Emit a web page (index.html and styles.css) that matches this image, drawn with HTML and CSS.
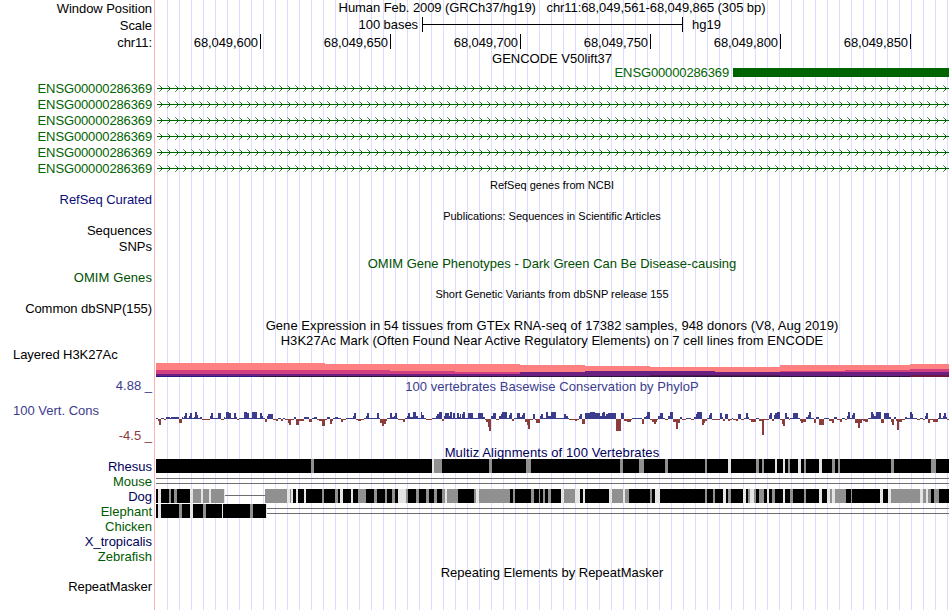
FILE: index.html
```html
<!DOCTYPE html>
<html lang="en">
<head>
<meta charset="utf-8">
<title>Human chr11:68,049,561-68,049,865</title>
<link rel="stylesheet" href="styles.css">
</head>
<body>
<main class="browser">
  <div class="row h17"><div class="label">Window Position</div><div class="title raise pos">Human Feb. 2009 (GRCh37/hg19) &nbsp; chr11:68,049,561-68,049,865 (305 bp)</div></div>
  <div class="row h17"><div class="label">Scale</div><div class="scale"><span class="bases">100 bases</span><i class="bar"></i><span>hg19</span></div></div>
  <div class="row h17"><div class="label">chr11:</div><div class="ruler"><span>68,049,600</span><span>68,049,650</span><span>68,049,700</span><span>68,049,750</span><span>68,049,800</span><span>68,049,850</span></div></div>
  <div class="row h14"><div></div><div class="title low">GENCODE V50lift37</div></div>
  <div class="row h16 green"><div></div><div class="gene"><span>ENSG00000286369</span><i></i></div></div>
  <div class="row h16 green"><div class="label">ENSG00000286369</div><svg class="intron"></svg></div>
  <div class="row h16 green"><div class="label">ENSG00000286369</div><svg class="intron"></svg></div>
  <div class="row h16 green"><div class="label">ENSG00000286369</div><svg class="intron"></svg></div>
  <div class="row h16 green"><div class="label">ENSG00000286369</div><svg class="intron"></svg></div>
  <div class="row h16 green"><div class="label">ENSG00000286369</div><svg class="intron"></svg></div>
  <div class="row h16 green"><div class="label">ENSG00000286369</div><svg class="intron"></svg></div>
  <div class="row h15"><div></div><div class="title small">RefSeq genes from NCBI</div></div>
  <div class="row h16 navy"><div class="label">RefSeq Curated</div></div>
  <div class="row h15"><div></div><div class="title small">Publications: Sequences in Scientific Articles</div></div>
  <div class="row h16"><div class="label plain">Sequences</div></div>
  <div class="row h16"><div class="label plain">SNPs</div></div>
  <div class="row h15 omim"><div></div><div class="title low">OMIM Gene Phenotypes - Dark Green Can Be Disease-causing</div></div>
  <div class="row h16 omim"><div class="label wide">OMIM Genes</div></div>
  <div class="row h15"><div></div><div class="title small">Short Genetic Variants from dbSNP release 155</div></div>
  <div class="row h16"><div class="label">Common dbSNP(155)</div></div>
  <div class="row h16"><div></div><div class="title low loose">Gene Expression in 54 tissues from GTEx RNA-seq of 17382 samples, 948 donors (V8, Aug 2019)</div></div>
  <div class="row h15"><div></div><div class="title loose">H3K27Ac Mark (Often Found Near Active Regulatory Elements) on 7 cell lines from ENCODE</div></div>
  <div class="row h30 mark"><div class="label left">Layered H3K27Ac</div><svg id="mark" viewBox="155 348 794 30"></svg></div>
  <div class="row h16 cons"><div class="label plain">4.88 _</div><div class="title low phylo">100 vertebrates Basewise Conservation by PhyloP</div></div>
  <div class="row h50 cons"><div class="consLabels"><span class="left">100 Vert. Cons</span><span class="min">-4.5 _</span></div><svg id="phylop" viewBox="155 394 794 50"></svg></div>
  <div class="row h15 multiz"><div></div><div class="title">Multiz Alignments of 100 Vertebrates</div></div>
  <div class="row h15 dark"><div class="label plain">Rhesus</div><svg id="rhesus" viewBox="155 0 794 15"></svg></div>
  <div class="row h15 forest"><div class="label plain">Mouse</div><svg id="mouse" viewBox="155 0 794 15"></svg></div>
  <div class="row h15 dark"><div class="label plain">Dog</div><svg id="dog" viewBox="155 0 794 15"></svg></div>
  <div class="row h15 forest"><div class="label plain">Elephant</div><svg id="elephant" viewBox="155 0 794 15"></svg></div>
  <div class="row h15 forest"><div class="label plain">Chicken</div></div>
  <div class="row h15 dark"><div class="label plain">X_tropicalis</div></div>
  <div class="row h15 forest"><div class="label plain">Zebrafish</div></div>
  <div class="row h15 repeat"><div></div><div class="title">Repeating Elements by RepeatMasker</div></div>
  <div class="row h15 masker"><div class="label">RepeatMasker</div></div>
</main>
<script src="tracks.js"></script>
</body>
</html>
```
FILE: styles.css
```css
body {
  margin: 0;
  background: #fff;
  color: #000;
  font: 13px "Liberation Sans", Arial, sans-serif;
}

.browser {
  width: 949px;
  height: 610px;
  overflow: hidden;
  background:
    linear-gradient(#ffb4b4, #ffb4b4) 154px 0 / 1px 100% no-repeat,
    linear-gradient(#fff, #fff) 0 0 / 156px 100% no-repeat,
    linear-gradient(90deg, #dcdcff 1px, transparent 1px) 167px 0 / 12px 100% repeat-x;
}

.row {
  display: grid;
  grid-template-columns: 155px 794px;
  white-space: nowrap;
}

.row svg { display: block; width: 794px; height: 100%; shape-rendering: crispEdges; }

.h14 { height: 14px; line-height: 14px; }
.h15 { height: 15px; line-height: 15px; }
.h16 { height: 16px; line-height: 16px; }
.h17 { height: 17px; line-height: 17px; }
.h30 { height: 30px; line-height: 14px; }
.h50 { height: 50px; line-height: 16px; }

.label { padding-right: 3px; text-align: right; letter-spacing: -0.06px; }
.label.plain { letter-spacing: 0; }
.label.wide { letter-spacing: 0.1px; }
.label.left { padding-left: 13px; text-align: left; }
.title { text-align: center; }
.title.raise { line-height: 15px; }
.title.low { padding-top: 1px; }
.loose { letter-spacing: 0.06px; }
.phylo { letter-spacing: 0.03px; }
.pos { letter-spacing: -0.075px; }
.small { font-size: 11px; line-height: 17px; }

.green { color: #006400; }
.green .label, .gene { letter-spacing: -0.13px; }
.navy { color: #0c0c78; }
.omim { color: #005000; }
.cons { color: #3c3c8c; }
.multiz, .dark { color: #00005a; }
.forest { color: #005a00; }

.scale { display: flex; line-height: 15px; }
.bases { width: 263px; margin-right: 4px; text-align: right; letter-spacing: -0.06px; }
.bar {
  width: 259px;
  height: 15px;
  margin-right: 9px;
  border: solid #000;
  border-width: 0 1px;
  background: linear-gradient(#000, #000) 0 7px / 100% 1px no-repeat;
}

.ruler { display: flex; height: 15px; letter-spacing: -0.08px; }
.ruler span {
  box-sizing: border-box;
  width: 130px;
  padding-right: 2px;
  border-right: 1px solid #000;
  text-align: right;
}
.ruler span:first-child { width: 106px; }

.gene { display: flex; align-items: center; }
.gene span { width: 574px; text-align: right; }
.gene i { width: 216px; height: 9px; margin-left: 4px; margin-bottom: 1px; background: #006400; }

.consLabels { display: flex; flex-direction: column; padding: 9px 3px 0 13px; }
.min { margin-top: 9px; text-align: right; color: #8c3c3c; }
.multiz { margin-top: 1px; height: 14px; letter-spacing: 0.1px; }
.multiz .title { line-height: 16px; }
.repeat { margin-top: 1px; }
.masker { margin-top: -1px; }
```
FILE: tracks.js
```js
const NS = 'http://www.w3.org/2000/svg';

function rect(svg, x, y, w, h, fill) {
  const r = document.createElementNS(NS, 'rect');
  for (const [k, v] of Object.entries({ x, y, width: w, height: h, fill })) r.setAttribute(k, v);
  svg.appendChild(r);
}

// Intron lines: strand arrows every 8px
document.querySelectorAll('.intron').forEach(svg => {
  svg.setAttribute('viewBox', '155 0 794 16');
  rect(svg, 157, 7, 792, 1, '#006400');
  for (let x = 161; x < 949; x += 8) {
    rect(svg, x, 6, 1, 3, '#006400');
    rect(svg, x - 1, 5, 1, 1, '#2c802c');
    rect(svg, x - 1, 9, 1, 1, '#2c802c');
    rect(svg, x - 2, 4, 1, 1, '#60a060');
    rect(svg, x - 2, 10, 1, 1, '#60a060');
  }
});

// Stepped layers, each step is [x, top]; every layer runs down to y = 377
const layers = [
  ['#ff8080', [[156, 363], [325, 364], [520, 365], [585, 366], [650, 367], [780, 365], [910, 364]]],
  ['#d04080', [[156, 370], [390, 371], [455, 372], [780, 371], [845, 370], [910, 369]]],
  ['#6a2080', [[156, 374], [520, 372], [585, 371], [715, 372]]],
  ['#301040', [[156, 376]]]
];
const mark = document.getElementById('mark');
for (const [color, steps] of layers) {
  steps.forEach(([x, y], i) => rect(mark, x, y, (i + 1 < steps.length ? steps[i + 1][0] : 949) - x, 377 - y, color));
}
rect(mark, 156, 376, 104, 1, '#301880');
rect(mark, 650, 375, 130, 1, '#501850');
rect(mark, 910, 375, 39, 2, '#701840');

// Conservation scores: "position:height" runs, positions in thirds of a pixel from the origin
const scores = [
  [150, '18:1 23:-2 27:-6 33:1 41:-1 48:2 60:1 63:2 87:-4 96:2 99:1 102:3 105:6 111:1 117:3 120:6 126:1 132:2 135:7 141:4 144:1 150:2 156:-1 180:3 183:6 189:1 204:6 213:-1 221:2 225:1 228:7 237:6 243:1 252:6 258:2 261:-1 267:1 282:7 291:6 297:1 306:7 321:1 330:6 336:3 339:1 345:-3 351:3 354:5 369:-1 378:-2 384:1 392:-2 399:1 406:-1 414:-4 417:-6 423:-1 432:2 438:-6 447:-2 462:2 477:-3 486:1 493:2 500:-1 508:-2 516:-7 525:-1 531:2 540:-5 546:-2 549:1 556:2 564:1 572:-3 580:-1 588:1 609:3 612:6 618:-1 624:-2 633:-1 641:1 648:3 651:6 657:1 681:6 687:1 690:-4 696:-7 702:-5 708:-2 711:1 720:6 726:2 732:3 735:6 741:1 744:-1 759:-3 765:1 771:3 774:6 780:2 789:7 798:3 804:1 810:0'],
  [420, '0:1 3:7 6:4 12:1 18:-1 36:1 48:3 51:5 57:7 66:-2 72:3 75:6 87:3 90:7 96:1 99:6 105:1 111:6 117:2 120:5 123:1 126:5 129:7 135:1 144:6 159:1 174:6 189:2 195:-1 198:-3 204:-8 207:-12 213:3 219:6 228:-1 237:3 243:5 246:7 261:1 267:4 270:6 276:-2 282:1 291:6 300:2 306:4 309:6 315:-3 321:-6 324:-10 330:-1 339:5 345:-1 348:-4 360:3 363:5 369:1 378:7 384:3 393:7 408:1 432:5 438:3 444:1 447:-1 465:-2 471:-1 477:3 480:5 486:-5 495:6 510:7 525:6 540:3 546:6 549:7 555:3 558:5 564:6 588:-12 603:6 612:-2 621:-3 633:-1 636:1 666:-5 672:2 678:3 681:7 690:-1 696:-3 702:-5 708:-3 711:-1 714:3 720:6 729:1 735:-1 744:3 750:7 759:-3 768:-10 774:-4 780:2 786:-1 798:1 810:0'],
  [690, '0:1 3:-1 12:2 18:5 21:7 36:-6 42:-4 45:-2 51:1 57:4 60:6 66:-1 90:6 96:2 99:-2 105:5 114:-2 120:-1 126:1 129:-1 138:-2 144:5 153:-1 162:1 168:6 174:2 177:-1 183:-3 198:1 207:-2 216:-16 222:-1 237:4 240:6 246:-2 252:4 255:6 261:7 270:-1 276:-5 279:-7 285:6 291:2 297:-1 300:1 309:6 324:1 330:-2 333:-4 339:-3 348:2 354:4 357:7 363:1 372:-4 378:2 387:-6 402:1 417:-2 426:-4 432:2 441:-1 450:-3 456:1 465:-1 471:3 474:7 480:1 486:4 489:6 495:-4 504:-9 510:-4 516:-1 519:-2 525:-3 534:1 543:7 549:5 552:3 558:7 573:-4 582:6 597:2 603:-3 606:-6 612:2 618:-2 621:-11 627:-3 636:-1 645:2 651:1 660:7 666:5 669:1 681:-1 690:1 699:-1 705:3 708:6 714:-4 720:-1 729:-3 744:1 747:6 753:1 759:3 762:6 768:2 771:-1 777:0']
];
const phylop = document.getElementById('phylop');
for (const [origin, text] of scores) {
  const runs = text.split(' ').map(s => s.split(':').map(Number));
  runs.forEach(([p, h], i) => {
    if (i + 1 === runs.length) return;
    const x = origin + Math.round(p / 3);
    const w = origin + Math.round(runs[i + 1][0] / 3) - x;
    if (h > 0) rect(phylop, x, 419 - h, w, h, '#3c3c8c');
    else rect(phylop, x, 419, w, -h, '#8c3c3c');
  });
}

// Alignment blocks: g = partial identity, w = low identity, same units as above
const shades = { g: '#909090', w: '#e4e4e4' };
function align(id, blocks, segments) {
  const svg = document.getElementById(id);
  blocks.forEach(([x, end]) => rect(svg, x, 0, end - x, 14, '#000'));
  for (const [origin, text] of segments) {
    for (const s of text.split(' ')) {
      const [a, b] = s.slice(1).split('-').map(n => Math.round(n / 3));
      rect(svg, origin + a, 0, b - a, 14, shades[s[0]]);
    }
  }
}
function doubleLine(id, x) {
  const svg = document.getElementById(id);
  rect(svg, x, 4, 949 - x, 1, '#6e6e6e');
  rect(svg, x, 9, 949 - x, 1, '#6e6e6e');
}
align('rhesus', [[156, 949]], [
  [150, 'g483-492'],
  [350, 'w246-252 g252-276 g417-426 g528-543'],
  [550, 'g210-219 g267-282 g345-354 g465-471 w534-543'],
  [750, 'g18-27 g36-42 w75-81 w99-105 g114-120 w144-153 g162-168 w207-216 g246-255 g264-270 g423-432 g543-558']
]);
doubleLine('mouse', 156);
align('dog', [[156, 225], [265, 949]], [
  [150, 'w24-33 g57-63 g72-81 w120-129 g129-153 w153-159 g159-177 w177-183 g183-222 w222-225 g345-411 w411-420 g420-423 w423-429 w438-444 w462-468 g516-522 g555-564 w570-579'],
  [350, 'w3-9 g24-48 g72-81 g105-111 g126-135 w144-168 g168-174 g198-207 g228-237 g252-261 g276-285 w285-291 g291-324 g372-378 w378-387 g387-480 g489-495 g543-552 g567-570 g579-585 g594-600'],
  [550, 'g0-3 w33-42 g42-75 w75-90 w99-105 w177-186 g186-219 w219-225 g225-237 g300-306 w315-330 g465-471 g489-495 w519-528 g534-543 w579-588 g594-600'],
  [750, 'w0-12 g12-18 g27-42 w51-57 g66-75 w99-105 g120-129 g162-168 w207-216 w231-240 g240-246 w246-255 g255-288 g303-306 w390-399 w414-423 g423-510 w510-519 g519-528 w528-534 g534-543 g552-567']
]);
rect(document.getElementById('dog'), 225, 6, 40, 1, '#6e6e6e');
align('elephant', [[156, 266]], [
  [150, 'w24-33 g87-96 w120-129 g159-168 w216-219 g300-309 w348-351']
]);
doubleLine('elephant', 267);
```
